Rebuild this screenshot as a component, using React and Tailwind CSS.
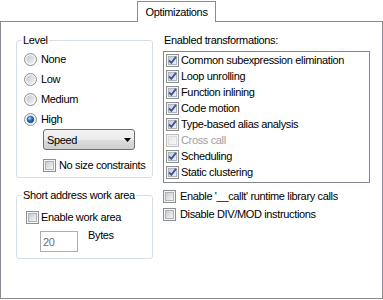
import React from "react";

function CheckBox({ checked = false, disabled = false }) {
  return (
    <svg width="13" height="13" viewBox="0 0 13 13" className="shrink-0 block">
      <defs>
        <linearGradient id="cbInner" x1="0" y1="0" x2="1" y2="1">
          <stop offset="0" stopColor="#c6cbd1" />
          <stop offset="1" stopColor="#f6f6f6" />
        </linearGradient>
        <linearGradient id="cbInnerDis" x1="0" y1="0" x2="1" y2="1">
          <stop offset="0" stopColor="#e6e6e6" />
          <stop offset="1" stopColor="#fafafa" />
        </linearGradient>
      </defs>
      <rect x="0.5" y="0.5" width="12" height="12" fill="#f4f4f4" stroke={disabled ? "#bcbcbc" : "#8e8f8f"} />
      <rect
        x="2.5"
        y="2.5"
        width="8"
        height="8"
        fill={disabled ? "url(#cbInnerDis)" : "url(#cbInner)"}
        stroke={disabled ? "#dcdcdc" : "#aeb3b9"}
      />
      {checked && (
        <path d="M3 6.3 L5.3 8.8 L10 2.8" stroke="#3b56a6" strokeWidth="1.9" fill="none" strokeLinejoin="miter" />
      )}
    </svg>
  );
}

function Radio({ checked = false }) {
  return (
    <svg width="13" height="13" viewBox="0 0 13 13" className="shrink-0 block">
      <defs>
        <linearGradient id="rdInner" x1="0" y1="0" x2="1" y2="1">
          <stop offset="0" stopColor="#c3c8ce" />
          <stop offset="1" stopColor="#f4f4f4" />
        </linearGradient>
        <radialGradient id="rdDot" cx="0.35" cy="0.3" r="0.8">
          <stop offset="0" stopColor="#a9e3ff" />
          <stop offset="0.45" stopColor="#2a78c6" />
          <stop offset="1" stopColor="#0d3a7a" />
        </radialGradient>
      </defs>
      <circle cx="6.5" cy="6.5" r="6" fill="#f4f4f4" stroke="#8e8f8f" />
      <circle cx="6.5" cy="6.5" r="4.2" fill="url(#rdInner)" />
      {checked && <circle cx="6.5" cy="6.5" r="3.3" fill="url(#rdDot)" stroke="#1e4f8f" strokeWidth="0.6" />}
    </svg>
  );
}

function GroupBox({ label, className, children }) {
  return (
    <div className={"relative border border-[#d5dfe5] rounded-[3px] " + className}>
      <div className="absolute left-[5px] -top-[8px] px-px bg-white leading-[14px] whitespace-nowrap">{label}</div>
      {children}
    </div>
  );
}

const items = [
  { t: "Common subexpression elimination", c: true },
  { t: "Loop unrolling", c: true },
  { t: "Function inlining", c: true },
  { t: "Code motion", c: true },
  { t: "Type-based alias analysis", c: true },
  { t: "Cross call", c: false, d: true },
  { t: "Scheduling", c: true },
  { t: "Static clustering", c: true },
];

export default function App() {
  return (
    <div className="w-[383px] h-[300px] bg-white text-black text-[11px] leading-[14px] tracking-[-0.35px] font-['Liberation_Sans',Arial,sans-serif] overflow-hidden">
      {/* tab strip */}
      <div className="h-[22px] flex items-end pl-[137px] relative z-10">
        <div className="w-[79px] h-[21px] bg-white border border-b-0 border-[#898c95] flex items-center justify-center pb-px">
          Optimizations
        </div>
      </div>
      {/* panel */}
      <div className="-mt-px h-[278px] border border-[#898c95] flex pl-[15px]">
        {/* left column */}
        <div className="w-[137px] flex flex-col">
          <GroupBox label="Level" className="mt-[18px] h-[138px]">
            <div className="pt-[8px] pl-[7px] flex flex-col">
              {["None", "Low", "Medium", "High"].map((r) => (
                <div key={r} className="h-[20px] flex items-center gap-[4px]">
                  <Radio checked={r === "High"} />
                  <span>{r}</span>
                </div>
              ))}
              <div className="ml-[19px] w-[92px] h-[21px] border border-[#707070] rounded-[3px] bg-[linear-gradient(to_bottom,#f2f2f2_0%,#ebebeb_50%,#dddddd_50%,#cfcfcf_100%)] flex items-center justify-between pl-[3px] pr-[3px]">
                <span>Speed</span>
                <svg width="7" height="4" viewBox="0 0 7 4" className="block">
                  <path d="M0 0 H7 L3.5 4 Z" fill="#000" />
                </svg>
              </div>
              <div className="mt-[8px] ml-[19px] h-[14px] flex items-center gap-[3px]">
                <CheckBox />
                <span>No size constraints</span>
              </div>
            </div>
          </GroupBox>
          <GroupBox label="Short address work area" className="mt-[17px] h-[64px]">
            <div className="pt-[14px] pl-[9px] flex flex-col">
              <div className="h-[14px] flex items-center gap-[2px]">
                <CheckBox />
                <span>Enable work area</span>
              </div>
              <div className="mt-[7px] ml-[14px] flex items-start">
                <div className="w-[38px] h-[21px] border border-[#abadb3] flex items-center pl-[2px] text-[#6d6d6d]">
                  20
                </div>
                <span className="ml-[10px] -mt-[3px]">Bytes</span>
              </div>
            </div>
          </GroupBox>
        </div>
        {/* right column */}
        <div className="ml-[10px] w-[207px] flex flex-col pt-[11px]">
          <div className="pl-px h-[14px]">Enabled transformations:</div>
          <div className="mt-[4px] h-[132px] border border-[#828790] pt-0">
            {items.map((it) => (
              <div key={it.t} className="h-[16px] flex items-center gap-[2px] pl-[2px]">
                <CheckBox checked={it.c} disabled={it.d} />
                <span className={it.d ? "text-[#a0a0a0]" : ""}>{it.t}</span>
              </div>
            ))}
          </div>
          <div className="mt-[6px] h-[14px] flex items-center gap-[4px]">
            <CheckBox />
            <span>Enable '__callt' runtime library calls</span>
          </div>
          <div className="mt-[4px] h-[14px] flex items-center gap-[4px]">
            <CheckBox />
            <span>Disable DIV/MOD instructions</span>
          </div>
        </div>
      </div>
    </div>
  );
}
